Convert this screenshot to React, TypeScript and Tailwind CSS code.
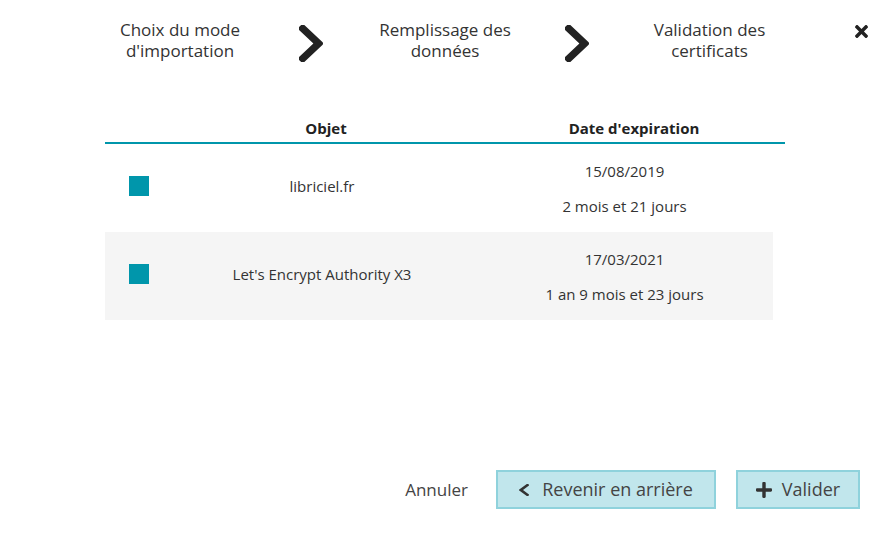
import React from "react";

const Chevron = () => (
  <svg width="24" height="37" viewBox="34 44 258 424" preserveAspectRatio="none" className="shrink-0">
    <path
      fill="#222"
      d="M285.476 272.971L91.132 467.314c-9.373 9.373-24.569 9.373-33.941 0l-22.667-22.667c-9.357-9.357-9.375-24.522-.04-33.901L188.505 256 34.484 101.255c-9.335-9.379-9.317-24.544.04-33.901l22.667-22.667c9.373-9.373 24.569-9.373 33.941 0L285.475 239.03c9.373 9.372 9.373 24.568.001 33.941z"
    />
  </svg>
);

const Close = () => (
  <svg width="13" height="13" viewBox="0 80 352 352" className="shrink-0">
    <path
      fill="#222"
      d="M242.72 256l100.07-100.07c12.28-12.28 12.28-32.19 0-44.48l-22.240-22.24c-12.28-12.28-32.19-12.28-44.48 0L176 189.28 75.93 89.21c-12.28-12.28-32.19-12.28-44.48 0L9.21 111.45c-12.28 12.28-12.28 32.19 0 44.48L109.28 256 9.21 356.07c-12.28 12.28-12.28 32.19 0 44.48l22.24 22.24c12.28 12.28 32.2 12.28 44.48 0L176 322.72l100.07 100.07c12.28 12.28 32.2 12.28 44.48 0l22.24-22.24c12.28-12.28 12.28-32.19 0-44.48L242.72 256z"
    />
  </svg>
);

const SmallChevronLeft = () => (
  <svg width="10" height="12" viewBox="28 44 258 424" preserveAspectRatio="none">
    <path
      fill="#333"
      d="M34.52 239.03L228.87 44.69c9.37-9.37 24.57-9.37 33.94 0l22.67 22.670c9.36 9.36 9.37 24.52.04 33.9L131.49 256l154.02 154.75c9.34 9.38 9.32 24.54-.04 33.9l-22.67 22.67c-9.37 9.37-24.57 9.37-33.94 0L34.52 272.97c-9.37-9.37-9.37-24.57 0-33.94z"
    />
  </svg>
);

const Plus = () => (
  <svg width="16" height="16" viewBox="0 32 448 448">
    <path
      fill="#333"
      d="M416 208H272V64c0-17.67-14.33-32-32-32h-32c-17.67 0-32 14.33-32 32v144H32c-17.67 0-32 14.33-32 32v32c0 17.67 14.33 32 32 32h144v144c0 17.67 14.33 32 32 32h32c17.67 0 32-14.33 32-32V304h144c17.67 0 32-14.33 32-32v-32c0-17.67-14.33-32-32-32z"
    />
  </svg>
);

const rows = [
  { name: "libriciel.fr", date: "15/08/2019", left: "2 mois et 21 jours", bg: "bg-white" },
  { name: "Let's Encrypt Authority X3", date: "17/03/2021", left: "1 an 9 mois et 23 jours", bg: "bg-[#f5f5f5]" },
];

export default function App() {
  return (
    <div
      className="w-[890px] h-[540px] bg-white text-[#333] flex flex-col"
      style={{ fontFamily: '"Open Sans", "Noto Sans", sans-serif' }}
    >
      {/* Steps */}
      <div className="flex items-start pt-[19px] pl-[90px]">
        <div className="w-[180px] text-center text-[17px] leading-[21px]">
          Choix du mode
          <br />
          d'importation
        </div>
        <div className="ml-[29px] mt-[6px]">
          <Chevron />
        </div>
        <div className="ml-[32px] w-[180px] text-center text-[17px] leading-[21px]">
          Remplissage des
          <br />
          données
        </div>
        <div className="ml-[30px] mt-[6px]">
          <Chevron />
        </div>
        <div className="ml-[30px] w-[181px] text-center text-[17px] leading-[21px]">
          Validation des
          <br />
          certificats
        </div>
        <div className="ml-[55px] mt-[6px]">
          <Close />
        </div>
      </div>

      {/* Table */}
      <div className="ml-[105px] mt-[52px] w-[680px]">
        <div className="grid grid-cols-[64px_314px_302px] h-[30px] items-center border-b-2 border-[#0096ab] text-[15px] font-bold text-[#222]">
          <div />
          <div className="text-center">Objet</div>
          <div className="text-center">Date d'expiration</div>
        </div>
        {rows.map((r) => (
          <div
            key={r.name}
            className={`grid grid-cols-[63px_308px_297px] w-[668px] h-[88px] items-center text-[15px] ${r.bg}`}
          >
            <div className="pl-[24px] mb-[4px]">
              <div className="w-[20px] h-[20px] bg-[#0096ab]" />
            </div>
            <div className="text-center mb-[4px]">{r.name}</div>
            <div className="flex flex-col items-center gap-[15px] leading-[20px]">
              <div>{r.date}</div>
              <div>{r.left}</div>
            </div>
          </div>
        ))}
      </div>

      {/* Buttons */}
      <div className="mt-auto mb-[31px] mr-[30px] flex items-center justify-end text-[#444]">
        <span className="mr-[28px] text-[17px]">Annuler</span>
        <button className="w-[220px] h-[39px] border-2 border-[#8fd2dc] bg-[#c1e6ec] flex items-center justify-center gap-[13px] text-[18px]">
          <SmallChevronLeft />
          <span>Revenir en arrière</span>
        </button>
        <button className="ml-[20px] w-[124px] h-[39px] border-2 border-[#8fd2dc] bg-[#c1e6ec] flex items-center justify-center gap-[10px] text-[18px]">
          <Plus />
          <span>Valider</span>
        </button>
      </div>
    </div>
  );
}
